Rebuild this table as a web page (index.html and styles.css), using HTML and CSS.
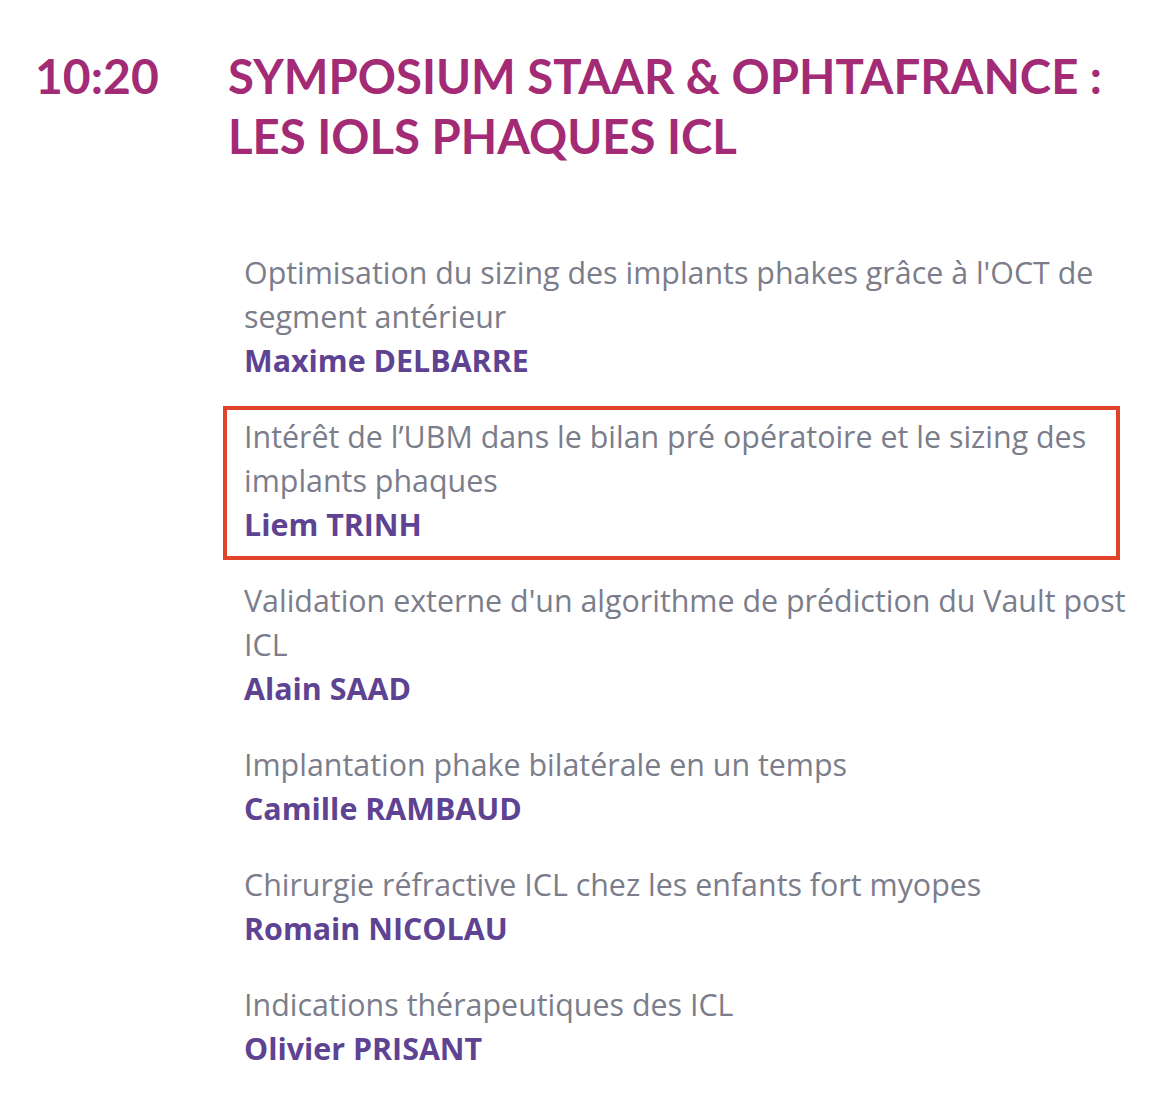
FILE: index.html
```html
<!DOCTYPE html>
<html lang="fr">
<head>
<meta charset="utf-8">
<link rel="stylesheet" href="styles.css">
</head>
<body>
<section class="session">
  <div class="time">10:20</div>
  <div class="content">
    <h2 class="title">SYMPOSIUM STAAR &amp; OPHTAFRANCE : LES IOLS PHAQUES ICL</h2>
    <ul class="talks">
      <li class="talk">
        <p class="talk-title">Optimisation du sizing des implants phakes grâce à l'OCT de segment antérieur</p>
        <p class="speaker">Maxime DELBARRE</p>
      </li>
      <li class="talk talk-highlight">
        <p class="talk-title">Intérêt de l’UBM dans le bilan pré opératoire et le sizing des implants phaques</p>
        <p class="speaker">Liem TRINH</p>
      </li>
      <li class="talk">
        <p class="talk-title">Validation externe d'un algorithme de prédiction du Vault post ICL</p>
        <p class="speaker">Alain SAAD</p>
      </li>
      <li class="talk">
        <p class="talk-title">Implantation phake bilatérale en un temps</p>
        <p class="speaker">Camille RAMBAUD</p>
      </li>
      <li class="talk">
        <p class="talk-title">Chirurgie réfractive ICL chez les enfants fort myopes</p>
        <p class="speaker">Romain NICOLAU</p>
      </li>
      <li class="talk">
        <p class="talk-title">Indications thérapeutiques des ICL</p>
        <p class="speaker">Olivier PRISANT</p>
      </li>
    </ul>
  </div>
</section>
</body>
</html>
```
FILE: styles.css
```css
* { box-sizing: border-box; }
html, body { margin: 0; padding: 0; background: #ffffff; }
body { font-family: Lato, "Open Sans", sans-serif; }

.session {
  display: flex;
  padding: 46px 0 0 35px;
}
.time {
  width: 193px;
  flex: none;
  font-size: 48px;
  line-height: 60px;
  font-weight: 700;
  color: #a32a74;
}
.content {
  width: 920px;
}
.title {
  margin: 0;
  font-size: 47.3px;
  line-height: 60px;
  font-weight: 700;
  color: #a32a74;
}
.talks {
  list-style: none;
  margin: 85px 0 0 16px;
  padding: 0;
  width: 892px;
  display: flex;
  flex-direction: column;
  gap: 32px;
}
.talk {
  position: relative;
}
.talk p {
  margin: 0;
  font-family: "Open Sans", Lato, sans-serif;
  font-size: 30.4px;
  line-height: 44px;
}
.talk-title {
  color: #7b7d8b;
}
.speaker {
  color: #5e4393;
  font-weight: 700;
}
.talk-highlight::before {
  content: "";
  position: absolute;
  left: -21px;
  top: -9px;
  width: 889px;
  bottom: -13px;
  border: 4px solid #e0452c;
}
```
